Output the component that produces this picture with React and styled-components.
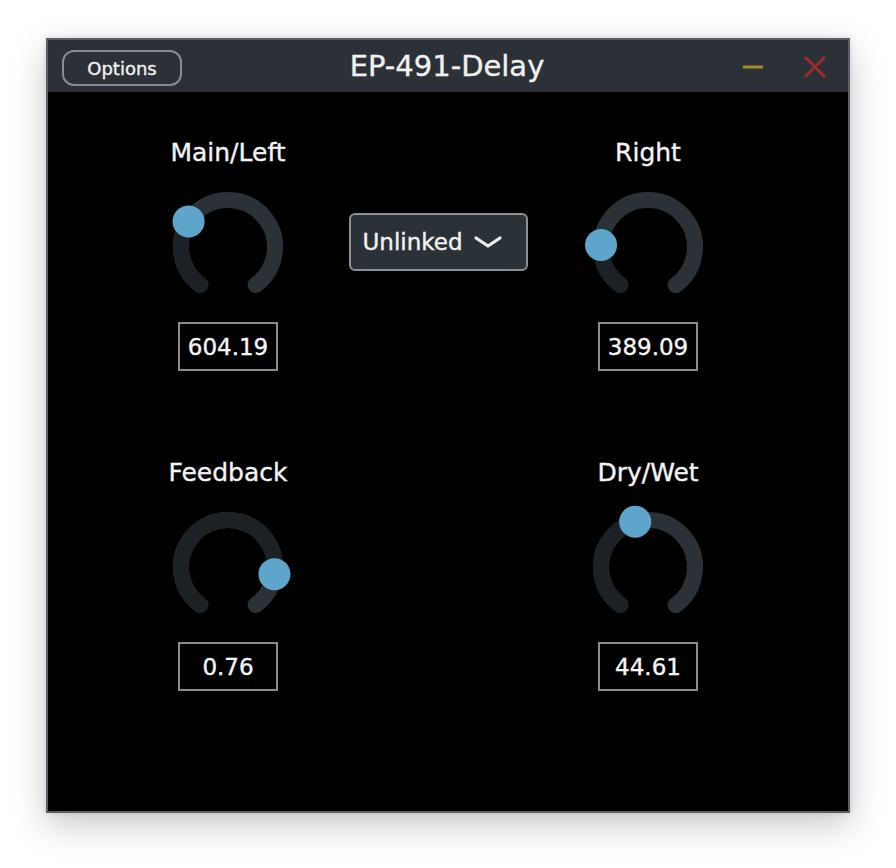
import React from "react";
import styled, { createGlobalStyle, css } from "styled-components";

const Global = createGlobalStyle`
  html, body { margin: 0; padding: 0; background: #ffffff; }
  body { font-family: "DejaVu Sans", "Noto Sans", sans-serif; }
  #root { width: 896px; height: 868px; }
  * { box-sizing: border-box; }
`;

const heavy = css`
  -webkit-text-stroke: 0.35px currentColor;
`;

const Page = styled.div`
  width: 896px;
  height: 868px;
  padding: 38px 0 0 46px;
`;

const Window = styled.div`
  width: 804px;
  height: 775px;
  border: 2px solid #596065;
  background: #000;
  box-shadow: 0 12px 34px rgba(0, 0, 0, 0.22), 0 0 6px rgba(0, 0, 0, 0.12);
  display: flex;
  flex-direction: column;
`;

const TitleBar = styled.div`
  height: 52px;
  background: #2b3136;
  display: grid;
  grid-template-columns: 1fr auto 1fr;
  align-items: center;
  padding: 0 22px 0 14px;
`;

const OptionsButton = styled.button`
  justify-self: start;
  width: 120px;
  height: 36px;
  margin-top: 4px;
  border: 2px solid #878c90;
  border-radius: 12px;
  background: #2b3136;
  color: #f2f2f2;
  font-family: "DejaVu Sans", sans-serif;
  font-size: 18px;
  padding: 0;
  ${heavy}
`;

const Title = styled.div`
  color: #f0f0f0;
  font-size: 29px;
  font-family: "DejaVu Sans", sans-serif;
  margin-left: 6px;
  ${heavy}
`;

const WinControls = styled.div`
  justify-self: end;
  display: flex;
  align-items: center;
  gap: 40px;
  padding-top: 2px;
`;

const Body = styled.div`
  flex: 1;
  display: grid;
  grid-template-columns: 160px 260px 160px;
  grid-template-rows: auto auto;
  row-gap: 88px;
  padding: 47px 0 0 100px;
  align-content: start;
`;

const KnobCell = styled.div`
  display: flex;
  flex-direction: column;
  align-items: center;
`;

const Label = styled.div`
  color: #f4f4f4;
  font-size: 25px;
  line-height: 28px;
  height: 28px;
  white-space: nowrap;
  ${heavy}
`;

const KnobSvg = styled.svg`
  display: block;
  margin-top: 10px;
`;

const ValueBox = styled.div`
  margin-top: 5px;
  width: 100px;
  height: 49px;
  border: 2px solid #8b8b8b;
  color: #f6f6f6;
  font-size: 23px;
  display: flex;
  align-items: center;
  justify-content: center;
  ${heavy}
`;

const MiddleCell = styled.div`
  display: flex;
  justify-content: center;
  align-items: flex-start;
  padding-top: 74px;
`;

const Dropdown = styled.div`
  width: 179px;
  height: 58px;
  border: 2px solid #8a9094;
  border-radius: 6px;
  background: #2b3237;
  color: #f2f2f2;
  font-size: 23px;
  display: flex;
  align-items: center;
  padding-left: 12px;
  gap: 10px;
  ${heavy}
`;

const START = 216;
const SWEEP = 288;
const R = 47;
const C = 70;

const pt = (a) => {
  const rad = (a * Math.PI) / 180;
  return [C + R * Math.sin(rad), C - R * Math.cos(rad)];
};

const arc = (a0, a1) => {
  const [x0, y0] = pt(a0);
  const [x1, y1] = pt(a1);
  const large = a1 - a0 > 180 ? 1 : 0;
  return `M ${x0.toFixed(2)} ${y0.toFixed(2)} A ${R} ${R} 0 ${large} 1 ${x1.toFixed(2)} ${y1.toFixed(2)}`;
};

function Knob({ label, value, frac }) {
  const a = START + SWEEP * frac;
  const [tx, ty] = pt(a);
  return (
    <KnobCell>
      <Label>{label}</Label>
      <KnobSvg width="140" height="140" viewBox="0 0 140 140">
        <path d={arc(START, START + SWEEP)} fill="none" stroke="#2b3237" strokeWidth="16" strokeLinecap="round" />
        <path d={arc(START, a)} fill="none" stroke="#1c2125" strokeWidth="16" strokeLinecap="round" />
        <circle cx={tx} cy={ty} r="16" fill="#5ea5cb" />
      </KnobSvg>
      <ValueBox>{value}</ValueBox>
    </KnobCell>
  );
}

export default function App() {
  return (
    <>
      <Global />
      <Page>
        <Window>
          <TitleBar>
            <OptionsButton>Options</OptionsButton>
            <Title>EP-491-Delay</Title>
            <WinControls>
              <svg width="22" height="20" viewBox="0 0 22 20">
                <line x1="1" y1="10" x2="21" y2="10" stroke="#a38d2c" strokeWidth="3" />
              </svg>
              <svg width="22" height="22" viewBox="0 0 22 22">
                <line x1="1" y1="1" x2="21" y2="21" stroke="#a52b2b" strokeWidth="2.5" />
                <line x1="21" y1="1" x2="1" y2="21" stroke="#a52b2b" strokeWidth="2.5" />
              </svg>
            </WinControls>
          </TitleBar>
          <Body>
            <Knob label="Main/Left" value="604.19" frac={0.302} />
            <MiddleCell>
              <Dropdown>
                <span>Unlinked</span>
                <svg width="30" height="14" viewBox="0 0 30 14">
                  <path d="M3 3 L15 11 L27 3" fill="none" stroke="#eeeeee" strokeWidth="3.2" strokeLinecap="round" strokeLinejoin="round" />
                </svg>
              </Dropdown>
            </MiddleCell>
            <Knob label="Right" value="389.09" frac={0.196} />
            <Knob label="Feedback" value="0.76" frac={0.843} />
            <div />
            <Knob label="Dry/Wet" value="44.61" frac={0.445} />
          </Body>
        </Window>
      </Page>
    </>
  );
}
